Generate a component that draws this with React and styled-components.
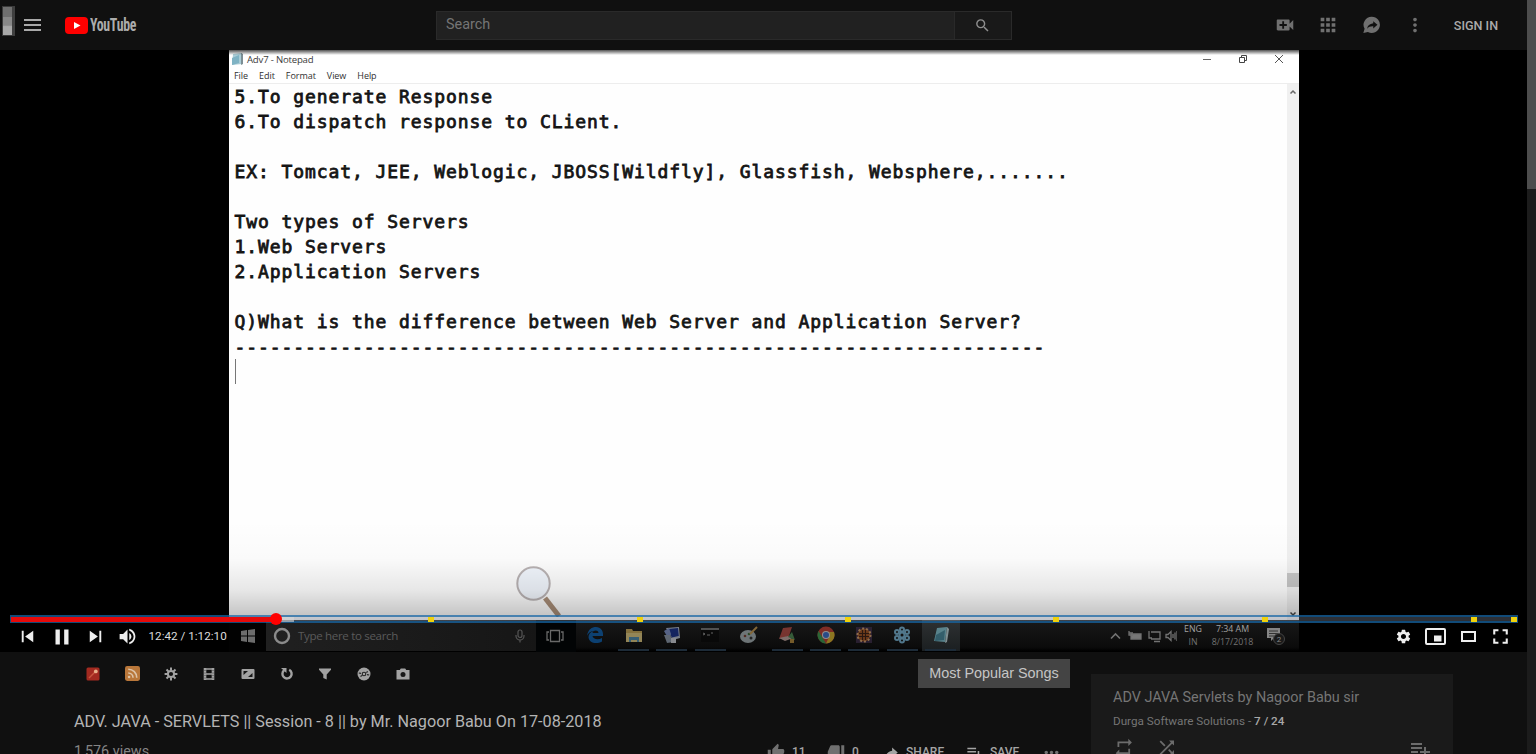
import React from "react";
import styled, { createGlobalStyle } from "styled-components";
import {
  MdApps,
  MdMoreVert,
  MdSearch,
  MdVideoCall,
  MdPause,
  MdSkipNext,
  MdSkipPrevious,
  MdVolumeUp,
  MdSettings,
  MdFullscreen,
  MdRepeat,
  MdShuffle,
  MdPlaylistAdd,
  MdThumbUp,
  MdThumbDown,
  MdMoreHoriz,
} from "react-icons/md";

const Global = createGlobalStyle`
  * { box-sizing: border-box; }
  html, body { margin: 0; height: 754px; overflow: hidden; background: #101010; }
  body { font-family: Roboto, "Liberation Sans", sans-serif; color: #aaa; }
  svg { display: block; flex: none; }
`;

const Page = styled.div`
  display: flex;
  width: 1536px;
  height: 754px;
  overflow: hidden;
`;

const Content = styled.div`
  width: 1527px;
  display: flex;
  flex-direction: column;
`;

const ScrollTrack = styled.div`
  width: 9px;
  background: #1c1c1c;
`;

const ScrollThumb = styled.div`
  height: 189px;
  background: #4d4d4d;
`;

/* Masthead */

const Header = styled.header`
  height: 50px;
  flex: none;
  display: flex;
  align-items: center;
  background: #101010;
  padding-left: 2px;
`;

const SideHandle = styled.div`
  width: 13px;
  height: 30px;
  margin-top: -8px;
  border: 1px solid #3a3a3a;
  border-right: 3px solid #3f3f3f;
  background: linear-gradient(#6f6f6f 0 35%, #888 36% 65%, #a8a8a8 70%);
`;

const MenuButton = styled.div`
  margin-left: 9px;
  width: 17px;
  height: 12px;
  display: flex;
  flex-direction: column;
  justify-content: space-between;
  span {
    height: 1.6px;
    background: #aaa;
  }
`;

const Logo = styled.div`
  margin-left: 24px;
  width: 72px;
  display: flex;
  align-items: center;
  gap: 2px;
`;

const LogoText = styled.span`
  font: 700 18px/20px "Roboto Condensed", Roboto, sans-serif;
  color: #acacac;
  transform: scaleX(0.77);
  transform-origin: left center;
  letter-spacing: -0.4px;
  white-space: nowrap;
`;

const SearchForm = styled.div`
  margin-left: 299px;
  width: 576px;
  height: 29px;
  display: flex;
  border: 1px solid #2a2a2a;
`;

const SearchInput = styled.div`
  flex: 1;
  background: #212121;
  padding-left: 9px;
  font-size: 14.4px;
  line-height: 26px;
  color: #757575;
`;

const SearchButton = styled.div`
  width: 57px;
  background: #191919;
  border-left: 1px solid #292929;
  display: grid;
  place-items: center;
  padding-right: 2px;
  color: #8f8f8f;
`;

const HeaderIcons = styled.nav`
  margin-left: 262px;
  display: flex;
  gap: 21.4px;
  color: #707070;
`;

const SignIn = styled.div`
  margin-left: 28px;
  font-size: 12.6px;
  font-weight: 500;
  color: #aaa;
  white-space: nowrap;
`;

/* Player */

const Player = styled.section`
  position: relative;
  height: 602px;
  flex: none;
  background: #000;
  display: flex;
  padding-left: 229px;
`;

const Video = styled.div`
  position: relative;
  width: 1070px;
  height: 602px;
  display: flex;
  flex-direction: column;
  background: #fff;
`;

const TopShade = styled.div`
  position: absolute;
  inset: 0 0 auto 0;
  height: 5px;
  background: linear-gradient(rgba(0, 0, 0, 0.68), rgba(0, 0, 0, 0));
`;

const WindowBar = styled.div`
  height: 18px;
  flex: none;
  display: flex;
  align-items: center;
  justify-content: space-between;
  padding: 0 15px 0 2px;
`;

const WindowTitle = styled.div`
  display: flex;
  align-items: center;
  gap: 4px;
  font: 9.6px "Open Sans", sans-serif;
  letter-spacing: -0.2px;
  color: #3c3c3c;
`;

const WindowButtons = styled.div`
  display: flex;
  gap: 26px;
`;

const MenuBar = styled.div`
  height: 16px;
  flex: none;
  display: flex;
  gap: 11px;
  padding-left: 5px;
  border-bottom: 1px solid #ededed;
  font: 9px/16px "Open Sans", sans-serif;
  letter-spacing: -0.05px;
  color: #303030;
`;

const Editor = styled.div`
  flex: 1;
  display: flex;
  background: #fefefe;
`;

const Document = styled.pre`
  margin: 0;
  flex: 1;
  padding-left: 5.5px;
  font: 18px/25px "DejaVu Sans Mono", monospace;
  letter-spacing: 0.914px;
  -webkit-text-stroke: 0.8px #141414;
  color: #141414;
`;

const Caret = styled.div`
  width: 1.4px;
  height: 25px;
  background: #777;
`;

const NoteScroll = styled.div`
  width: 12px;
  background: #f0f0f0;
  display: flex;
  flex-direction: column;
  align-items: center;
  padding: 5px 0 3px;
`;

const NoteThumb = styled.div`
  margin-top: auto;
  margin-bottom: 24px;
  width: 12px;
  height: 14px;
  background: #c6c6c6;
`;

const Taskbar = styled.div`
  height: 32px;
  flex: none;
  display: flex;
  background: linear-gradient(#191919, #0b0b0b 85%, #000 97%);
`;

const StartCell = styled.div`
  width: 37px;
  background: #020202;
  display: grid;
  place-items: center;
`;

const CortanaBox = styled.div`
  width: 270px;
  height: 31px;
  display: flex;
  align-items: center;
  padding: 0 10px 0 7px;
  background: linear-gradient(90deg, #202020, #161616);
  font: 11.6px "Open Sans", sans-serif;
  letter-spacing: -0.35px;
  color: #5a5a5a;
  span {
    margin: 0 auto 0 7px;
    white-space: nowrap;
  }
`;

const ViewCell = styled.div`
  width: 40px;
  display: grid;
  place-items: center;
  padding-right: 2px;
  background: #020405;
`;

const AppCell = styled.div`
  width: 38.4px;
  height: 31px;
  display: flex;
  flex-direction: column;
  align-items: center;
  justify-content: flex-end;
  background: ${(p) => (p.$active ? "linear-gradient(#2e3132, #1b1f21)" : "transparent")};
  &::after {
    content: "";
    width: 31px;
    height: 2px;
    margin-top: 5px;
    background: ${(p) => (p.$open ? "#1d2b38" : "transparent")};
  }
`;

const Tray = styled.div`
  margin-left: auto;
  padding-right: 13px;
  display: flex;
  align-items: center;
  color: #777;
`;

const TrayText = styled.div`
  width: ${(p) => p.$w}px;
  margin-top: -1px;
  text-align: center;
  font: 8.8px/13px "Open Sans", sans-serif;
  color: #727272;
  white-space: nowrap;
  b {
    display: block;
    font-weight: 400;
    color: #a2a2a2;
  }
`;

const Magnifier = styled.div`
  position: absolute;
  left: 286px;
  top: 515px;
`;

const BottomShade = styled.div`
  position: absolute;
  left: 0;
  right: 0;
  bottom: 32px;
  height: 100px;
  background: linear-gradient(rgba(0, 0, 0, 0), rgba(0, 0, 0, 0.015) 38%, rgba(0, 0, 0, 0.09) 70%, rgba(0, 0, 0, 0.25));
`;

const Chrome = styled.div`
  position: absolute;
  left: 10px;
  right: 9px;
  bottom: 0;
  height: 37px;
`;

const ProgressBar = styled.div`
  position: relative;
  height: 8px;
  border: 2px solid rgba(24, 104, 168, 0.72);
  border-left-width: 1px;
  border-right-width: 1px;
  background: rgba(205, 220, 245, 0.22);
  background-clip: padding-box;
`;

const Played = styled.div`
  width: 266px;
  height: 5px;
  background: #e60a0a;
  box-shadow: 17px 0 0 rgba(215, 215, 215, 0.6);
`;

const Knob = styled.div`
  position: absolute;
  left: 259px;
  top: -4px;
  width: 12px;
  height: 12px;
  border-radius: 50%;
  background: #f00;
`;

const Marker = styled.i`
  position: absolute;
  top: 0;
  width: 6px;
  height: 5px;
  background: #f0d20c;
`;

const Controls = styled.div`
  height: 28px;
  display: flex;
  align-items: center;
  padding: 0 5px 1px 6px;
  color: #eee;
`;

const Time = styled.div`
  margin-left: 11px;
  font-size: 11.7px;
  line-height: 16px;
  margin-top: -2px;
  color: #ddd;
`;

const RightControls = styled.div`
  margin-left: auto;
  display: flex;
  align-items: center;
`;

/* Below the player */

const Below = styled.main`
  flex: 1;
  display: flex;
  gap: 21px;
  padding-left: 74px;
  align-items: flex-start;
`;

const Primary = styled.div`
  width: 996px;
`;

const ToolRow = styled.div`
  margin-top: 7px;
  height: 29px;
  display: flex;
  align-items: center;
  justify-content: space-between;
`;

const Tools = styled.div`
  display: flex;
`;

const Tool = styled.div`
  width: 38.7px;
  display: grid;
  place-items: center;
`;

const SongsButton = styled.div`
  width: 152px;
  height: 29px;
  background: #444;
  color: #c6c6c6;
  font: 14.4px/29px "Liberation Sans", sans-serif;
  text-align: center;
  white-space: nowrap;
`;

const Title = styled.h1`
  margin: 23px 0 0;
  font-size: 16.2px;
  line-height: 22px;
  font-weight: 400;
  color: #b4b4b4;
`;

const MetaRow = styled.div`
  margin-top: 8px;
  height: 22px;
  display: flex;
  font-size: 14.4px;
  line-height: 22px;
  color: #858585;
`;

const Actions = styled.div`
  margin-left: auto;
  margin-right: 9px;
  display: flex;
  align-items: center;
  font-size: 12px;
  font-weight: 500;
  color: #a0a0a0;
`;

const Action = styled.div`
  width: ${(p) => p.$w}px;
  display: flex;
  align-items: center;
  gap: ${(p) => p.$gap || 5}px;
  color: #a4a4a4;
  svg {
    color: ${(p) => p.$icon || "#707070"};
  }
`;

const Playlist = styled.aside`
  margin-top: 22px;
  width: 362px;
  height: 100px;
  background: #1a1a1a;
  padding: 13px 22px 0;
`;

const PlaylistTitle = styled.div`
  font-size: 14.4px;
  line-height: 22px;
  color: #757575;
`;

const PlaylistMeta = styled.div`
  margin-top: 3px;
  font-size: 11.7px;
  line-height: 18px;
  color: #757575;
  b {
    font-weight: 500;
    color: #a8a8a8;
  }
`;

const PlaylistTools = styled.div`
  margin-top: 7px;
  display: flex;
  gap: 21px;
  color: #6c6c6c;
  svg:last-child {
    margin-left: auto;
    margin-right: -1px;
  }
`;

const MessageIcon = () => (
  <svg width="21.6" height="21.6" viewBox="0 0 24 24">
    <path
      fill="currentColor"
      fillRule="evenodd"
      d="M12 3a9 9 0 1 1-4.3 16.9L2.6 21.2 4 16.4A9 9 0 0 1 12 3zm1.6 5v2.4C9.5 10.9 7.3 13.200 6.800 16.300c1.700-2 3.700-2.800 6.800-2.700v2.500l4.700-4.100z"
    />
  </svg>
);

const ToolIcon = ({ children, size = 14 }) => (
  <svg width={size} height={size} viewBox="0 0 14 14" fill="none" stroke="#a2a2a2" strokeWidth="2">
    {children}
  </svg>
);

const AppIcon = ({ children }) => (
  <svg width="18" height="18" viewBox="0 0 18 18" opacity="0.62">
    {children}
  </svg>
);

const apps = [
  {
    open: false,
    icon: (
      <path fill="#0b5fae" d="M1 10C2 3 6 1 10 1c5 0 7 4 7 7v2H6.500c.3 3 5.500 4.300 9.500 2v3.500C10 19 2.500 16.500 2.500 11c0-3 2-5 5-6C4.500 5 2 7.500 1 10zm5.500-3h6c0-3.300-5.500-3.300-6 0z" />
    ),
  },
  {
    open: true,
    icon: (
      <g>
        <path fill="#c9a957" d="M1 3h6l1 2h9v11H1z" />
        <path fill="#e3cd83" d="M1 7h16v9H1z" />
        <path fill="#4f8fb3" d="M4 11h10v5h-2v-2H6v2H4z" />
      </g>
    ),
  },
  {
    open: true,
    icon: (
      <g>
        <path fill="#b9c3d6" d="M3 2l13-1 1 11-7 2z" />
        <path fill="#16308f" d="M5 3l10-1 .8 8-7 1.500z" />
        <path fill="#7f93cc" d="M1 5l5-3 2 6-3 4z" />
        <path fill="#8f9cae" d="M1 9h6l4 7-7 1z" />
        <path fill="#d2d6df" d="M8 12h5v5H8z" />
      </g>
    ),
  },
  {
    open: true,
    icon: (
      <g>
        <path fill="#060606" d="M0 2h18v14H0z" />
        <path fill="#777" d="M0 2h18v2H0z" />
        <path stroke="#999" d="M2 7l2 1-2 1M6 9h3M10 7h2" fill="none" />
      </g>
    ),
  },
  {
    open: false,
    icon: (
      <g>
        <ellipse cx="8" cy="10.500" rx="8" ry="6.500" fill="#a7b3b6" />
        <circle cx="5" cy="10" r="1.300" fill="#7a3e30" />
        <circle cx="9" cy="8" r="1.300" fill="#3c6b38" />
        <circle cx="11" cy="12" r="1.500" fill="#333" />
        <path stroke="#c79a4e" strokeWidth="2" d="M10 8l7-7" />
      </g>
    ),
  },
  {
    open: true,
    icon: (
      <g>
        <path fill="#b64a42" d="M5 2l9-1-3 9-10 3z" />
        <path fill="#c3a7a1" d="M1 12l9-2 5 2-8 3z" />
        <path fill="#4d8a52" d="M10 11l4-5 3 8z" />
        <path fill="#b58a3c" d="M12 13h4v4h-4z" />
      </g>
    ),
  },
  {
    open: true,
    icon: (
      <g>
        <circle cx="9" cy="9" r="8.500" fill="#c23c30" />
        <path fill="#3b9a4d" d="M1.500 5L9 17.500A8.500 8.500 0 0 1 1.500 5z" />
        <path fill="#d9b52c" d="M9 17.500L13 9l-1-3h5a8.500 8.500 0 0 1-8 11.500z" />
        <circle cx="9" cy="9" r="4" fill="#ddd" />
        <circle cx="9" cy="9" r="3" fill="#3a6fd0" />
      </g>
    ),
  },
  {
    open: true,
    icon: (
      <g>
        <path fill="#3a2a45" d="M1 1h16v16H1z" />
        <circle cx="9" cy="9" r="6.500" fill="#a2521f" stroke="#d9a571" strokeWidth="2" strokeDasharray="2 2" />
        <path stroke="#3a1c10" d="M4 7.500h10M4 10.500h10M7.500 4v10M10.500 4v10" />
      </g>
    ),
  },
  {
    open: true,
    icon: (
      <g fill="none" stroke="#79b7d8" strokeWidth="2">
        <circle cx="9" cy="9" r="2.500" />
        <circle cx="9" cy="3.500" r="2" />
        <circle cx="9" cy="14.500" r="2" />
        <circle cx="4" cy="6" r="2" />
        <circle cx="14" cy="6" r="2" />
        <circle cx="4" cy="12" r="2" />
        <circle cx="14" cy="12" r="2" />
      </g>
    ),
  },
  {
    open: true,
    active: true,
    icon: (
      <g>
        <path fill="#77b9c6" d="M5 2l10-1-2 15-11-1z" />
        <path fill="#3d7f93" d="M4 9l9-5-1 10-9 1z" />
        <path fill="#b9d0d4" d="M15 1l2 2-2 13-2 1z" />
      </g>
    ),
  },
];

const markers = [417, 626, 834, 1042, 1251, 1460, 1500];

const lines = [
  "5.To generate Response",
  "6.To dispatch response to CLient.",
  "",
  "EX: Tomcat, JEE, Weblogic, JBOSS[Wildfly], Glassfish, Websphere,.......",
  "",
  "Two types of Servers",
  "1.Web Servers",
  "2.Application Servers",
  "",
  "Q)What is the difference between Web Server and Application Server?",
  "-".repeat(69),
];

function Masthead() {
  return (
    <Header>
      <SideHandle />
      <MenuButton>
        <span />
        <span />
        <span />
      </MenuButton>
      <Logo>
        <svg width="23" height="17" viewBox="0 0 23 17">
          <rect width="23" height="17" rx="4" fill="#f00" />
          <path d="M9 5l6.500 3.500L9 12z" fill="#fff" />
        </svg>
        <LogoText>YouTube</LogoText>
      </Logo>
      <SearchForm>
        <SearchInput>Search</SearchInput>
        <SearchButton>
          <MdSearch size={17} />
        </SearchButton>
      </SearchForm>
      <HeaderIcons>
        <MdVideoCall size={22} />
        <MdApps size={22} />
        <MessageIcon />
        <MdMoreVert size={22} />
      </HeaderIcons>
      <SignIn>SIGN IN</SignIn>
    </Header>
  );
}

function Notepad() {
  return (
    <>
      <WindowBar>
        <WindowTitle>
          <svg width="12" height="14" viewBox="0 0 12 14">
            <path d="M2 2l9-1v11l-10 1z" fill="#a9ccd6" />
            <path d="M1 6l7-3v8l-7 2z" fill="#7fb3c4" />
            <path d="M10 1l2 1v10l-2 1z" fill="#7c8e94" />
          </svg>
          Adv7 - Notepad
        </WindowTitle>
        <WindowButtons>
          <svg width="10" height="10" viewBox="0 0 10 10" stroke="#666" fill="none">
            <path d="M1 5.500h8" />
          </svg>
          <svg width="10" height="10" viewBox="0 0 10 10" stroke="#444" fill="none">
            <path d="M1.500 3.500h5v5h-5zM3.500 3V1.500h5v5H7" />
          </svg>
          <svg width="10" height="10" viewBox="0 0 10 10" stroke="#555" fill="none">
            <path d="M1 1l8 8M9 1L1 9" />
          </svg>
        </WindowButtons>
      </WindowBar>
      <MenuBar>
        <span>File</span>
        <span>Edit</span>
        <span>Format</span>
        <span>View</span>
        <span>Help</span>
      </MenuBar>
      <Editor>
        <Document>
          {lines.join("\n")}
          <Caret />
        </Document>
        <NoteScroll>
          <svg width="8" height="6" viewBox="0 0 8 6" stroke="#666" strokeWidth="1.500" fill="none">
            <path d="M1.500 4.500L4 2l2.500 2.500" />
          </svg>
          <NoteThumb />
          <svg width="8" height="6" viewBox="0 0 8 6" stroke="#444" strokeWidth="1.500" fill="none">
            <path d="M1.500 1.500L4 4l2.500-2.500" />
          </svg>
        </NoteScroll>
      </Editor>
    </>
  );
}

function WindowsTaskbar() {
  return (
    <Taskbar>
      <StartCell>
        <svg width="14" height="14" viewBox="0 0 14 14" fill="#6c6c6c">
          <path d="M0 2l6-1v5.500H0zM7 .9L14 0v6.500H7zM0 7.500h6V13l-6-1zM7 7.500h7V14l-7-1z" />
        </svg>
      </StartCell>
      <CortanaBox>
        <svg width="18" height="18" viewBox="0 0 18 18">
          <circle cx="9" cy="9" r="7" fill="none" stroke="#8b8b8b" strokeWidth="2.400" />
        </svg>
        <span>Type here to search</span>
        <svg width="12" height="14" viewBox="0 0 12 14" fill="none" stroke="#555" strokeWidth="1.200">
          <rect x="4" y="1" width="4" height="7.500" rx="2" />
          <path d="M2 6v1a4 4 0 0 0 8 0V6M6 11v2.500" />
        </svg>
      </CortanaBox>
      <ViewCell>
        <svg width="18" height="14" viewBox="0 0 18 14" fill="none" stroke="#696969" strokeWidth="1.300">
          <path d="M4.500 1.500h9v11h-9zM3 3H1v8h2M15 3h2v8h-2" />
        </svg>
      </ViewCell>
      {apps.map((app, i) => (
        <AppCell key={i} $open={app.open} $active={app.active}>
          <AppIcon>{app.icon}</AppIcon>
        </AppCell>
      ))}
      <Tray>
        <svg width="67" height="14" viewBox="0 0 67 14" fill="none" stroke="#727272" strokeWidth="1.300">
          <path d="M1 9.500L5.500 5 10 9.500" strokeWidth="1.600" />
          <path d="M21 5h10v5H21z" fill="#777" />
          <path d="M19 2v4h4M19 4h4" />
          <path d="M41 3h9v7h-9M44 12.500h6M39 2v7h3" />
          <path d="M56 5.500h2l3-3v9l-3-3h-2zM63 5v4M65 3.500v7M67 2v10" />
        </svg>
        <TrayText $w={32}>
          <b>ENG</b>IN
        </TrayText>
        <TrayText $w={47}>
          <b>7:34 AM</b>8/17/2018
        </TrayText>
        <svg width="30" height="20" viewBox="0 0 30 20">
          <path d="M11 2h13v10h-6l-3 3v-3h-4z" fill="#858585" />
          <path d="M13 5h9M13 7.500h9M13 10h5" stroke="#333" />
          <circle cx="23" cy="13" r="5.500" fill="#1a1a1a" stroke="#444" />
          <text x="23" y="16" textAnchor="middle" fontSize="8" fill="#888">2</text>
        </svg>
      </Tray>
    </Taskbar>
  );
}

function PlayerChrome() {
  return (
    <Chrome>
      <ProgressBar>
        <Played />
        {markers.map((x) => (
          <Marker key={x} style={{ left: x }} />
        ))}
        <Knob />
      </ProgressBar>
      <Controls>
        <MdSkipPrevious size={23} />
        <MdPause size={26} style={{ marginLeft: 9.5 }} />
        <MdSkipNext size={23} style={{ marginLeft: 9.5 }} />
        <MdVolumeUp size={21} style={{ marginLeft: 9.5 }} />
        <Time>12:42 / 1:12:10</Time>
        <RightControls>
          <MdSettings size={17} />
          <svg width="21" height="17" viewBox="0 0 21 17" style={{ marginLeft: 13 }}>
            <rect x="1" y="1" width="19" height="15" rx="1" fill="none" stroke="#eee" strokeWidth="2" />
            <path d="M9 7.500h7.500v6H9z" fill="#eee" />
          </svg>
          <svg width="15" height="11" viewBox="0 0 15 11" style={{ marginLeft: 14.5 }}>
            <path d="M1 1h13v9H1z" fill="none" stroke="#eee" strokeWidth="2" />
          </svg>
          <MdFullscreen size={25} style={{ marginLeft: 12.5 }} />
        </RightControls>
      </Controls>
    </Chrome>
  );
}

function ExtensionTools() {
  return (
    <Tools>
      <Tool>
        <ToolIcon>
          <rect x="0.500" y="0.500" width="13" height="13" rx="1.500" fill="#a32a20" stroke="none" />
          <path d="M3 11L9 5" stroke="#c8553f" strokeWidth="1.500" />
          <circle cx="9.800" cy="4.400" r="1.900" fill="#e8b08a" stroke="none" />
        </ToolIcon>
      </Tool>
      <Tool>
        <ToolIcon size={15}>
          <rect width="14" height="14" rx="2" fill="#b9773a" stroke="none" />
          <path d="M3 3c4.500 0 8 3.500 8 8M3 6.500c2.500 0 4.500 2 4.500 4.500" stroke="#ddc4a8" strokeWidth="1.500" />
          <circle cx="3.800" cy="10.200" r="1.200" fill="#ddc4a8" stroke="none" />
        </ToolIcon>
      </Tool>
      <Tool>
        <ToolIcon>
          <circle cx="7" cy="7" r="3.100" />
          <path d="M7 .6v2.600M7 10.800v2.600M.6 7h2.600M10.800 7h2.600M2.500 2.500l1.800 1.800M9.700 9.700l1.800 1.800M11.500 2.500L9.700 4.300M4.300 9.700l-1.800 1.800" />
        </ToolIcon>
      </Tool>
      <Tool>
        <ToolIcon>
          <path d="M3 1v12M11 1v12" strokeWidth="2.600" />
          <path d="M4 2h6M4 7h6M4 12h6" strokeWidth="1.600" />
          <path d="M2.500 3.500h1M2.500 6h1M2.500 8.500h1M2.500 11h1M10.500 3.500h1M10.500 6h1M10.500 8.500h1M10.500 11h1" stroke="#404040" strokeWidth="0.900" />
        </ToolIcon>
      </Tool>
      <Tool>
        <ToolIcon>
          <rect x="0.500" y="2" width="13" height="10" rx="1" fill="#a2a2a2" stroke="none" />
          <path d="M2.500 8V4H7zM11.500 6v4H7z" fill="#181818" stroke="none" />
        </ToolIcon>
      </Tool>
      <Tool>
        <ToolIcon>
          <path d="M9.200 2.800a4.600 4.600 0 1 1-5.100.5" strokeWidth="2.400" />
          <path d="M1 1h5.500v5z" fill="#a2a2a2" stroke="none" />
        </ToolIcon>
      </Tool>
      <Tool>
        <ToolIcon>
          <path d="M1 1.500h12v1.200L8.700 7.500v5L5.300 11V7.500L1 2.700z" fill="#a2a2a2" stroke="none" />
        </ToolIcon>
      </Tool>
      <Tool>
        <ToolIcon>
          <circle cx="7" cy="7" r="6.500" fill="#a2a2a2" stroke="none" />
          <circle cx="7" cy="7" r="1.800" stroke="#222" strokeWidth="1.100" />
          <path d="M1.800 6l2.200.4M3.500 9.500l1.500-1M10 7.600l2.200.4M9.300 5.500l1.500-1" stroke="#222" strokeWidth="1.100" />
        </ToolIcon>
      </Tool>
      <Tool>
        <ToolIcon>
          <path d="M.5 3h3.300l1-1.500h4.400l1 1.500h3.300v9.500H.5z" fill="#a2a2a2" stroke="none" />
          <circle cx="7" cy="7.500" r="2.500" fill="#181818" stroke="none" />
        </ToolIcon>
      </Tool>
    </Tools>
  );
}

export default function App() {
  return (
    <Page>
      <Global />
      <Content>
        <Masthead />
        <Player>
          <Video>
            <Notepad />
            <WindowsTaskbar />
            <Magnifier>
              <svg width="48" height="52" viewBox="0 0 48 52">
                <path d="M30 33l14 18" stroke="#a98e78" strokeWidth="5" />
                <circle cx="18.500" cy="18.500" r="16.200" fill="#f1f6fd" stroke="#b9b3b4" strokeWidth="2" />
              </svg>
            </Magnifier>
            <TopShade />
            <BottomShade />
          </Video>
          <PlayerChrome />
        </Player>
        <Below>
          <Primary>
            <ToolRow>
              <ExtensionTools />
              <SongsButton>Most Popular Songs</SongsButton>
            </ToolRow>
            <Title>ADV. JAVA - SERVLETS || Session - 8 || by Mr. Nagoor Babu On 17-08-2018</Title>
            <MetaRow>
              1,576 views
              <Actions>
                <Action $w={60} $gap={7}>
                  <MdThumbUp size={18} />
                  11
                </Action>
                <Action $w={57} $gap={7}>
                  <MdThumbDown size={18} />0
                </Action>
                <Action $w={81} $gap={7} $icon="#a4a4a4">
                  <svg width="15" height="15" viewBox="0 0 24 24">
                    <path fill="currentColor" d="M13 4v5C6 10 3 15 2 20c2.500-3.500 6-5.100 11-5.100V20l9-8z" />
                  </svg>
                  SHARE
                </Action>
                <Action $w={76} $gap={6} $icon="#a4a4a4">
                  <MdPlaylistAdd size={19} />
                  SAVE
                </Action>
                <Action $w={20}>
                  <MdMoreHoriz size={21} />
                </Action>
              </Actions>
            </MetaRow>
          </Primary>
          <Playlist>
            <PlaylistTitle>ADV JAVA Servlets by Nagoor Babu sir</PlaylistTitle>
            <PlaylistMeta>
              Durga Software Solutions - <b>7 / 24</b>
            </PlaylistMeta>
            <PlaylistTools>
              <MdRepeat size={21.6} />
              <MdShuffle size={21.6} />
              <MdPlaylistAdd size={24} />
            </PlaylistTools>
          </Playlist>
        </Below>
      </Content>
      <ScrollTrack>
        <ScrollThumb />
      </ScrollTrack>
    </Page>
  );
}
